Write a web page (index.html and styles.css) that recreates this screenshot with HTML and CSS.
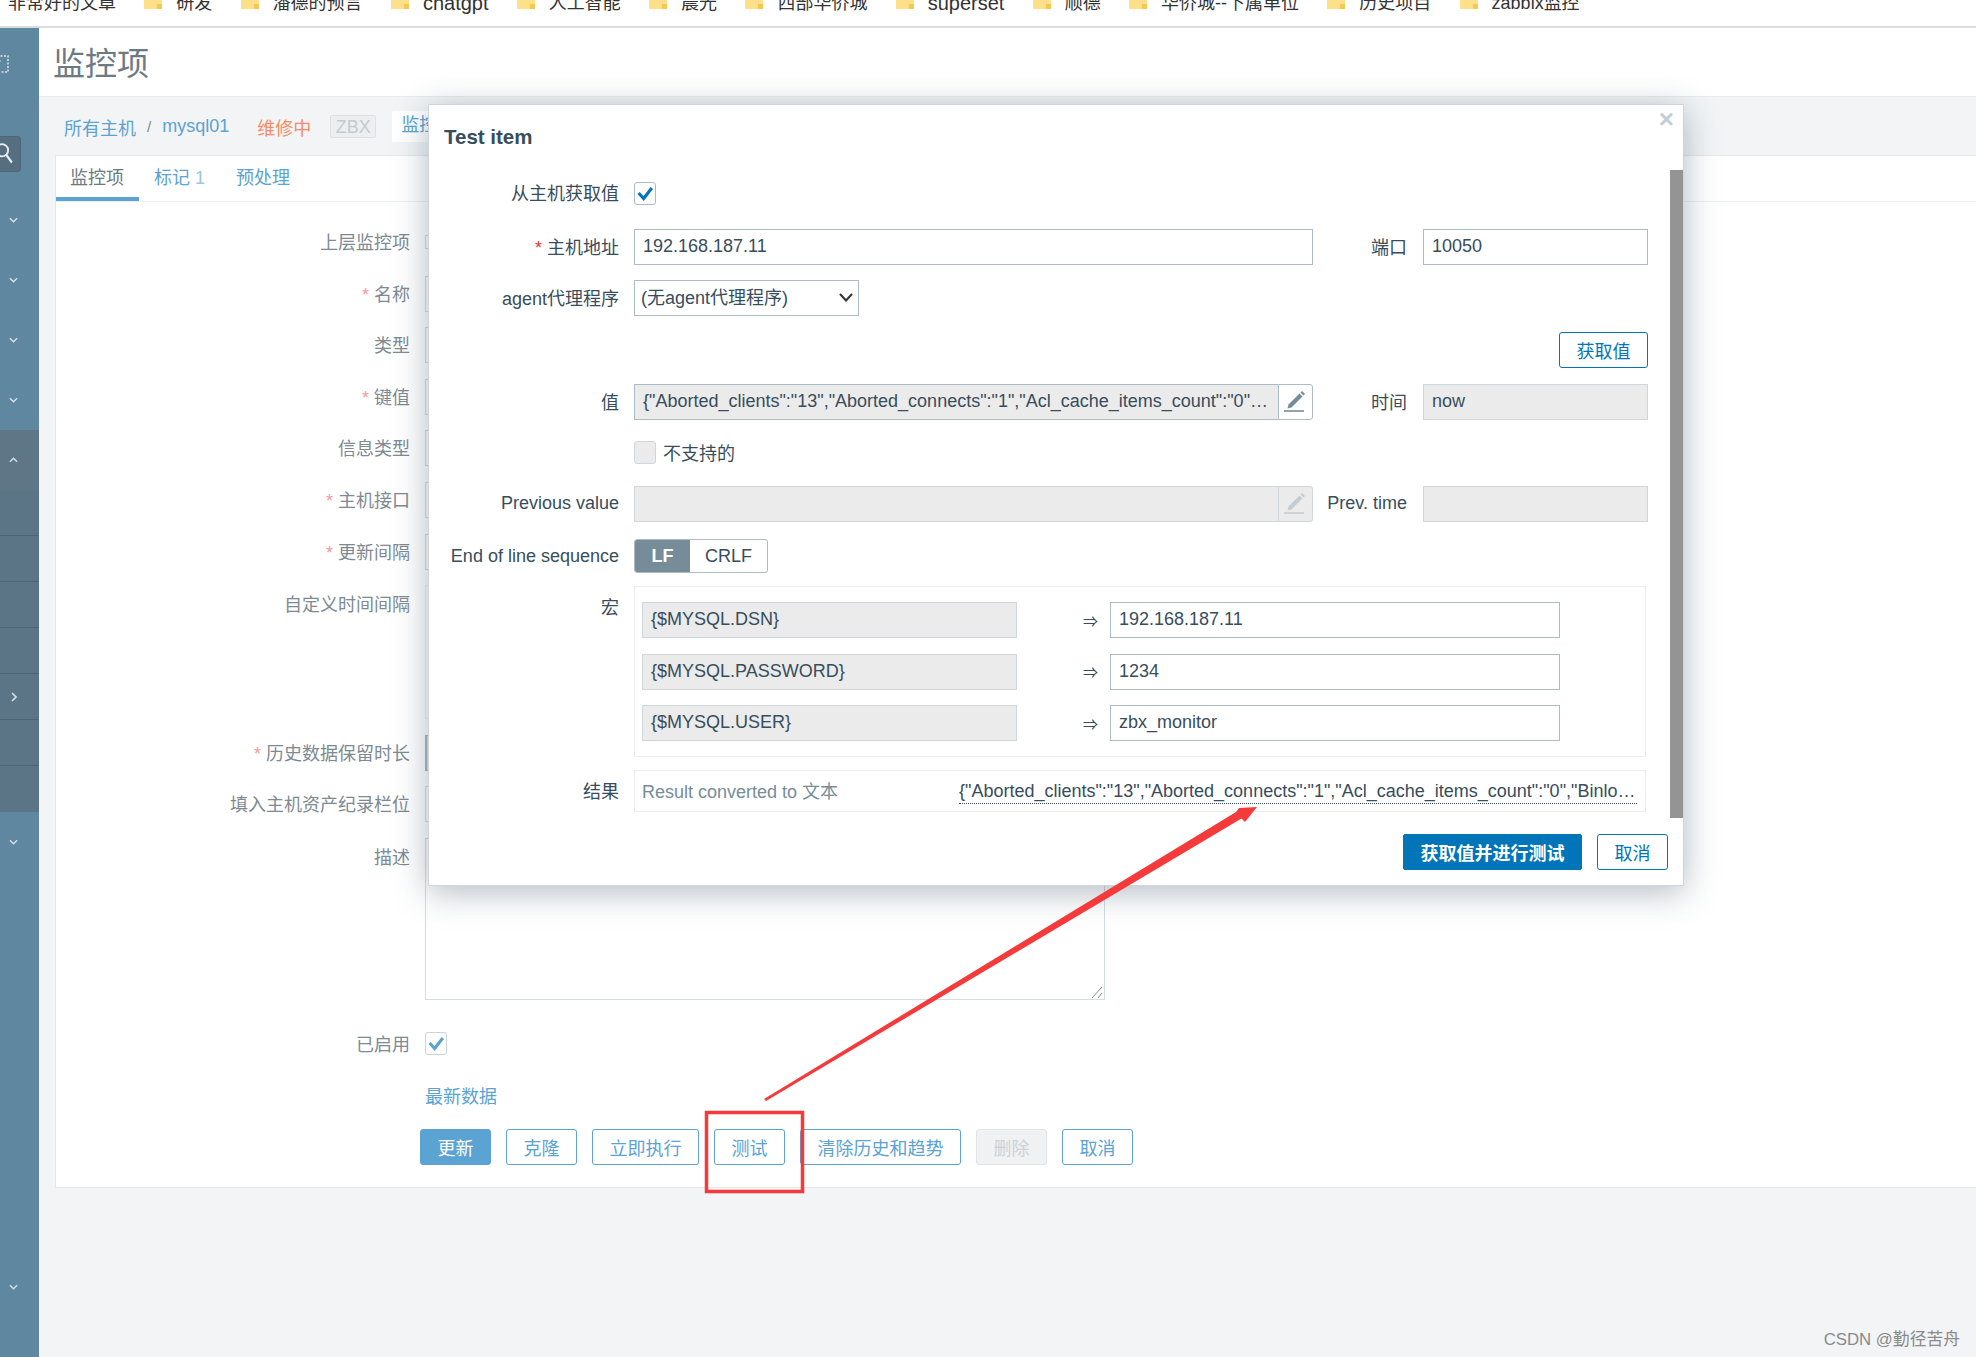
FILE: index.html
```html
<!DOCTYPE html>
<html lang="zh-CN">
<head>
    <meta charset="UTF-8">
    <title>监控项</title>
    <link rel="stylesheet" href="styles.css">
</head>
<body>
    <!-- Bookmarks Bar -->
    <div class="bookmarks">
        <span class="bookmark">非常好的文章</span>
        <span class="bookmark"><svg class="folder" viewBox="0 0 18 16"><path d="M0 2h7l2 2h9v12H0z" fill="#ffe08a"/><path d="M13 16v-5h5v5z" fill="#f6c94e"/></svg>研发</span>
        <span class="bookmark"><svg class="folder" viewBox="0 0 18 16"><path d="M0 2h7l2 2h9v12H0z" fill="#ffe08a"/><path d="M13 16v-5h5v5z" fill="#f6c94e"/></svg>潘德的预言</span>
        <span class="bookmark latin"><svg class="folder" viewBox="0 0 18 16"><path d="M0 2h7l2 2h9v12H0z" fill="#ffe08a"/><path d="M13 16v-5h5v5z" fill="#f6c94e"/></svg>chatgpt</span>
        <span class="bookmark"><svg class="folder" viewBox="0 0 18 16"><path d="M0 2h7l2 2h9v12H0z" fill="#ffe08a"/><path d="M13 16v-5h5v5z" fill="#f6c94e"/></svg>人工智能</span>
        <span class="bookmark"><svg class="folder" viewBox="0 0 18 16"><path d="M0 2h7l2 2h9v12H0z" fill="#ffe08a"/><path d="M13 16v-5h5v5z" fill="#f6c94e"/></svg>晨光</span>
        <span class="bookmark"><svg class="folder" viewBox="0 0 18 16"><path d="M0 2h7l2 2h9v12H0z" fill="#ffe08a"/><path d="M13 16v-5h5v5z" fill="#f6c94e"/></svg>西部华侨城</span>
        <span class="bookmark latin"><svg class="folder" viewBox="0 0 18 16"><path d="M0 2h7l2 2h9v12H0z" fill="#ffe08a"/><path d="M13 16v-5h5v5z" fill="#f6c94e"/></svg>superset</span>
        <span class="bookmark"><svg class="folder" viewBox="0 0 18 16"><path d="M0 2h7l2 2h9v12H0z" fill="#ffe08a"/><path d="M13 16v-5h5v5z" fill="#f6c94e"/></svg>顺德</span>
        <span class="bookmark"><svg class="folder" viewBox="0 0 18 16"><path d="M0 2h7l2 2h9v12H0z" fill="#ffe08a"/><path d="M13 16v-5h5v5z" fill="#f6c94e"/></svg>华侨城--下属单位</span>
        <span class="bookmark"><svg class="folder" viewBox="0 0 18 16"><path d="M0 2h7l2 2h9v12H0z" fill="#ffe08a"/><path d="M13 16v-5h5v5z" fill="#f6c94e"/></svg>历史项目</span>
        <span class="bookmark"><svg class="folder" viewBox="0 0 18 16"><path d="M0 2h7l2 2h9v12H0z" fill="#ffe08a"/><path d="M13 16v-5h5v5z" fill="#f6c94e"/></svg>zabbix监控</span>
    </div>

    <div class="layout">
        <!-- Sidebar -->
        <aside class="sidebar">
            <svg class="side-logo" viewBox="0 0 12 18"><path d="M0 1h11v16H0" fill="none" stroke="#dbe5eb" stroke-width="1.5" stroke-dasharray="2 1.5"/><circle cx="2" cy="6" r="1.5" fill="#dbe5eb"/></svg>
            <div class="side-search">
                <svg viewBox="0 0 21 36"><circle cx="2" cy="14" r="6.5" fill="none" stroke="#e6edf1" stroke-width="2"/><path d="M6.5 19l6 8" stroke="#e6edf1" stroke-width="2.4"/></svg>
            </div>
            <div class="side-item"><svg class="chev" viewBox="0 0 10 6"><path d="M1 1l4 4 4-4"/></svg></div>
            <div class="side-item"><svg class="chev" viewBox="0 0 10 6"><path d="M1 1l4 4 4-4"/></svg></div>
            <div class="side-item"><svg class="chev" viewBox="0 0 10 6"><path d="M1 1l4 4 4-4"/></svg></div>
            <div class="side-item"><svg class="chev" viewBox="0 0 10 6"><path d="M1 1l4 4 4-4"/></svg></div>
            <div class="side-item active"><svg class="chev" viewBox="0 0 10 6"><path d="M1 5l4-4 4 4"/></svg></div>
            <div class="side-sub"></div>
            <div class="side-sub"></div>
            <div class="side-sub"></div>
            <div class="side-sub"></div>
            <div class="side-sub"><svg class="chev-right" viewBox="0 0 6 10"><path d="M1 1l4 4-4 4"/></svg></div>
            <div class="side-sub"></div>
            <div class="side-sub last"></div>
            <div class="side-item"><svg class="chev" viewBox="0 0 10 6"><path d="M1 1l4 4 4-4"/></svg></div>
            <div class="side-item side-bottom"><svg class="chev" viewBox="0 0 10 6"><path d="M1 1l4 4 4-4"/></svg></div>
        </aside>

        <!-- Page Content -->
        <main class="content">
            <header class="page-header"><h1>监控项</h1></header>

            <nav class="breadcrumbs">
                <a>所有主机</a>
                <span class="crumb-sep">/</span>
                <a>mysql01</a>
                <span class="maintenance">维修中</span>
                <span class="zbx">ZBX</span>
                <a class="crumb-tab">监控项</a>
            </nav>

            <section class="card">
                <div class="tabs">
                    <a class="tab current">监控项</a>
                    <a class="tab">标记 <sup>1</sup></a>
                    <a class="tab">预处理</a>
                </div>

                <div class="form-row short"><label>上层监控项</label><div class="stub thin"></div></div>
                <div class="form-row"><label><i>*</i>名称</label><div class="stub"></div></div>
                <div class="form-row"><label>类型</label><div class="stub"></div></div>
                <div class="form-row"><label><i>*</i>键值</label><div class="stub"></div></div>
                <div class="form-row"><label>信息类型</label><div class="stub"></div></div>
                <div class="form-row"><label><i>*</i>主机接口</label><div class="stub"></div></div>
                <div class="form-row"><label><i>*</i>更新间隔</label><div class="stub"></div></div>
                <div class="form-row tall"><label>自定义时间间隔</label><div class="stub pale"></div></div>
                <div class="form-row"><label><i>*</i>历史数据保留时长</label><div class="stub dark"></div></div>
                <div class="form-row"><label>填入主机资产纪录栏位</label><div class="stub"></div></div>
                <div class="form-row area"><label>描述</label>
                    <div class="stub textarea">
                        <svg class="grip" viewBox="0 0 12 12"><path d="M1 12L11 1M7 12l4-5" stroke="#888" fill="none"/></svg>
                    </div>
                </div>
                <div class="form-row check-row"><label>已启用</label>
                    <span class="checkbox faded"><svg viewBox="0 0 22 22"><path d="M4 10.5l5.5 6L18.5 5" /></svg></span>
                </div>
                <div class="form-row link-row"><label></label><a class="latest">最新数据</a></div>

                <div class="form-actions">
                    <button class="btn-fill">更新</button>
                    <button>克隆</button>
                    <button class="wide">立即执行</button>
                    <button>测试</button>
                    <button class="widest">清除历史和趋势</button>
                    <button class="off">删除</button>
                    <button>取消</button>
                </div>
            </section>
        </main>
    </div>

    <!-- Test Item Dialog -->
    <div class="modal">
        <span class="modal-close">×</span>
        <div class="modal-scroll"></div>
        <h2>Test item</h2>

        <div class="row first">
            <label>从主机获取值</label>
            <span class="checkbox"><svg viewBox="0 0 22 22"><path d="M4 10.5l5.5 6L18.5 5" /></svg></span>
        </div>
        <div class="row">
            <label><i>*</i>主机地址</label>
            <div class="field grow">192.168.187.11</div>
            <label class="side-label">端口</label>
            <div class="field small">10050</div>
        </div>
        <div class="row">
            <label>agent代理程序</label>
            <div class="field select">(无agent代理程序)
                <svg viewBox="0 0 14 9"><path d="M1 1l6 6.5L13 1" fill="none" stroke="#333" stroke-width="2"/></svg>
            </div>
        </div>
        <div class="row end">
            <button class="btn-outline">获取值</button>
        </div>
        <div class="row value-row">
            <label>值</label>
            <div class="group grow">
                <div class="field ro strong nowrap">{"Aborted_clients":"13","Aborted_connects":"1","Acl_cache_items_count":"0"…</div>
                <span class="edit"><svg viewBox="0 0 24 24"><path d="M3.5 18.5l1-4L15.5 3.5l3 3L7.5 17.5z" fill="#768d99"/><path d="M16.5 2.5L18 1l3 3-1.5 1.5z" fill="#768d99"/><path d="M0 21h20" stroke="#768d99" stroke-width="1.6"/></svg></span>
            </div>
            <label class="side-label">时间</label>
            <div class="field small ro">now</div>
        </div>
        <div class="row unsupported">
            <label></label>
            <span class="checkbox off"></span>
            <span class="check-text">不支持的</span>
        </div>
        <div class="row plain prev-row">
            <label>Previous value</label>
            <div class="group grow">
                <div class="field ro"></div>
                <span class="edit off"><svg viewBox="0 0 24 24"><path d="M3.5 18.5l1-4L15.5 3.5l3 3L7.5 17.5z" fill="#c5cdd2"/><path d="M16.5 2.5L18 1l3 3-1.5 1.5z" fill="#c5cdd2"/><path d="M0 21h20" stroke="#c5cdd2" stroke-width="1.6"/></svg></span>
            </div>
            <label class="side-label">Prev. time</label>
            <div class="field small ro"></div>
        </div>
        <div class="row plain eol">
            <label>End of line sequence</label>
            <div class="toggle"><span class="on">LF</span><span>CRLF</span></div>
        </div>
        <div class="row macro-row">
            <label>宏</label>
            <div class="macros">
                <div class="macro"><div class="field ro name">{$MYSQL.DSN}</div><span class="to">⇒</span><div class="field val">192.168.187.11</div></div>
                <div class="macro"><div class="field ro name">{$MYSQL.PASSWORD}</div><span class="to">⇒</span><div class="field val">1234</div></div>
                <div class="macro"><div class="field ro name">{$MYSQL.USER}</div><span class="to">⇒</span><div class="field val">zbx_monitor</div></div>
            </div>
        </div>
        <div class="row result-row">
            <label>结果</label>
            <div class="result">
                <span class="converted">Result converted to 文本</span>
                <span class="result-value">{"Aborted_clients":"13","Aborted_connects":"1","Acl_cache_items_count":"0","Binlog_cache_disk_use":"0","Binlog_stmt"</span>
            </div>
        </div>
        <div class="modal-footer">
            <button class="btn-primary">获取值并进行测试</button>
            <button class="btn-outline">取消</button>
        </div>
    </div>

    <!-- Red annotations drawn on the screenshot -->
    <svg class="marks" viewBox="0 0 1976 1357">
        <rect x="706.5" y="1112.5" width="96" height="79" fill="none" stroke="#f43a3a" stroke-width="3.5"/>
        <polygon points="764,1099 1236,812 1239,808 1257,807 1245,822 1241.5,818.5 766,1101" fill="#f43a3a"/>
    </svg>

    <div class="watermark">CSDN @勤径苦舟</div>
</body>
</html>
```

FILE: styles.css
```css
* {
    box-sizing: border-box;
}
html, body {
    margin: 0;
    padding: 0;
}
body {
    width: 1976px;
    height: 1357px;
    position: relative;
    overflow: hidden;
    font-family: "Liberation Sans", "Noto Sans CJK SC", sans-serif;
    font-size: 18px;
    color: #384d5c;
    background-color: #f2f4f6;
}
button {
    font: inherit;
    cursor: pointer;
}
label i {
    font-style: normal;
    color: #e33734;
    margin-right: 5px;
}

/* Bookmarks Bar */
.bookmarks {
    height: 28px;
    padding: 0 0 14px 8px;
    display: flex;
    align-items: flex-end;
    gap: 28.3px;
    overflow: hidden;
    background-color: #fff;
    border-bottom: 2px solid #dcdcdc;
    font-size: 18px;
    line-height: 18px;
    color: #333;
}
.bookmark {
    display: flex;
    align-items: flex-end;
    flex-shrink: 0;
    white-space: nowrap;
}
.bookmark.latin {
    font-size: 20px;
}
.folder {
    width: 18px;
    height: 16px;
    margin-right: 14px;
    margin-bottom: 3px;
}

/* Layout */
.layout {
    display: flex;
    height: 1329px;
}
.sidebar {
    width: 39px;
    flex-shrink: 0;
    display: flex;
    flex-direction: column;
    background-color: #5f87a0;
}
.side-logo {
    width: 12px;
    height: 18px;
    margin: 27px 0 0 -3px;
}
.side-search {
    width: 21px;
    height: 36px;
    margin-top: 63px;
    margin-bottom: 18px;
    background-color: #566f80;
    border: 1px solid #4e6778;
    border-left: 0;
    border-radius: 0 4px 4px 0;
}
.side-search svg {
    display: block;
    width: 20px;
    height: 34px;
}
.side-item {
    height: 60px;
    padding-left: 9px;
    display: flex;
    align-items: center;
}
.side-item.active {
    background-color: #5f7686;
}
.side-bottom {
    margin-top: auto;
    margin-bottom: 40px;
}
.side-sub {
    height: 46px;
    padding-left: 11px;
    display: flex;
    align-items: center;
    background-color: #5b7587;
    border-bottom: 1px solid #4c6475;
}
.side-sub:first-of-type {
    height: 45px;
}
.side-sub.last {
    border-bottom: 0;
}
.chev {
    width: 9px;
    height: 6px;
}
.chev-right {
    width: 6px;
    height: 10px;
}
.chev path, .chev-right path {
    fill: none;
    stroke: #d4e0e7;
    stroke-width: 1.6;
}

/* Page Content */
.content {
    flex: 1;
    min-width: 0;
}
.page-header {
    height: 69px;
    padding-left: 14px;
    display: flex;
    align-items: center;
    background-color: #fff;
    border-bottom: 1px solid #e9ecee;
}
.page-header h1 {
    margin: 0 0 2px;
    font-size: 32px;
    font-weight: normal;
    color: #6c7a84;
}
.breadcrumbs {
    height: 58px;
    padding-left: 25px;
    padding-top: 1px;
    display: flex;
    align-items: center;
    color: #5ba3d2;
}
.crumb-sep {
    margin: 0 11px;
    color: #7a8a95;
    font-size: 15px;
}
.maintenance {
    margin-left: 28px;
    color: #f58c68;
}
.zbx {
    margin-left: 19px;
    width: 46px;
    height: 23px;
    line-height: 23px;
    text-align: center;
    color: #c3cbd0;
    background-color: #eceef0;
    border: 1px solid #dde1e4;
    border-radius: 2px;
}
.crumb-tab {
    margin-left: 16px;
    padding: 0 9px;
    width: 300px;
    height: 31px;
    line-height: 29px;
    background-color: #fff;
    border-radius: 2px;
}
.card {
    height: 1033px;
    background-color: #fff;
    border-top: 1px solid #e5e8ea;
    border-left: 1px solid #e5e8ea;
    border-bottom: 1px solid #e5e8ea;
    margin-left: 16px;
    margin-top: 0;
}
.tabs {
    height: 46px;
    display: flex;
    border-bottom: 1px solid #ecEff1;
    margin-bottom: 22px;
    color: #5ba3d2;
}
.tab {
    padding: 0 16px 0 15px;
    height: 45px;
    line-height: 44px;
}
.tab sup {
    font-size: inherit;
    vertical-align: baseline;
    color: #9cc6e2;
}
.tab.current {
    width: 83px;
    padding-left: 14px;
    padding-right: 0;
    color: #6c7a84;
    border-bottom: 4px solid #5ba3d2;
}
.form-row {
    display: flex;
    align-items: center;
    height: 36px;
    margin-bottom: 15.6px;
    color: #7d8a93;
}
.form-row label {
    width: 354px;
    margin-right: 15px;
    padding-bottom: 2px;
    text-align: right;
}
.form-row label i {
    color: #f29a9a;
}
.form-row.short {
    margin-top: 0;
}
.form-row.tall {
    height: 134px;
    align-items: flex-start;
}
.form-row.tall label, .form-row.area label {
    padding-top: 5px;
}
.form-row.area {
    height: 162px;
    align-items: flex-start;
}
.form-row.check-row {
    height: 22px;
    margin-top: 33px;
    margin-bottom: 0;
}
.form-row.link-row {
    height: 22px;
    margin-top: 29px;
    margin-bottom: 0;
}
.latest {
    color: #5ba3d2;
}
.stub {
    width: 400px;
    height: 36px;
    background-color: #fff;
    border: 1px solid #d5dbdf;
}
.stub.thin {
    height: 14px;
}
.stub.pale {
    height: 134px;
    border-color: #edf0f2;
}
.stub.dark {
    background-color: #dbe1e5;
    border-color: #a9b8c2;
    border-width: 1px 0 1px 2px;
}
.stub.textarea {
    width: 680px;
    height: 162px;
    position: relative;
}
.grip {
    position: absolute;
    right: 1px;
    bottom: 1px;
    width: 12px;
    height: 12px;
}
.form-actions {
    margin: 23px 0 0 364px;
    display: flex;
    gap: 15px;
}
.form-actions button {
    width: 71px;
    height: 36px;
    padding: 0;
    color: #5ba3d2;
    background-color: #fff;
    border: 1px solid #5ba3d2;
    border-radius: 3px;
}
.form-actions .wide {
    width: 107px;
}
.form-actions .widest {
    width: 161px;
}
.form-actions .btn-fill {
    color: #fff;
    background-color: #5ba3d2;
}
.form-actions .off {
    color: #ccd2d6;
    background-color: #f0f1f2;
    border-color: #e1e4e6;
}

/* Checkbox */
.checkbox {
    display: block;
    width: 22px;
    height: 23px;
    flex-shrink: 0;
    background-color: #fff;
    border: 1px solid #acbbc4;
    border-radius: 3px;
}
.checkbox svg {
    display: block;
    width: 20px;
    height: 21px;
}
.checkbox path {
    fill: none;
    stroke: #0275b8;
    stroke-width: 3.4;
}
.checkbox.faded {
    border-color: #ccd4d9;
}
.checkbox.faded path {
    stroke: #5ba3d2;
}
.checkbox.off {
    background-color: #ebebeb;
    border-color: #d0d7db;
}

/* Test Item Dialog */
.modal {
    position: absolute;
    left: 428px;
    top: 104px;
    width: 1256px;
    height: 782px;
    padding-top: 20px;
    background-color: #fff;
    border: 1px solid #cfd6da;
    box-shadow: 0 6px 32px rgba(56, 77, 92, 0.38);
}
.modal h2 {
    margin: 0 0 26px 15px;
    font-size: 20.5px;
    line-height: 24px;
    font-weight: bold;
    color: #384d5c;
}
.modal-close {
    position: absolute;
    right: 9px;
    top: -1px;
    font-size: 26px;
    font-weight: bold;
    line-height: 30px;
    color: #c3cdd3;
}
.modal-scroll {
    position: absolute;
    right: 0;
    top: 65px;
    width: 13px;
    height: 648px;
    background-color: #949494;
}
.row {
    display: flex;
    align-items: center;
    height: 36px;
    margin-bottom: 15.4px;
    padding-right: 35px;
}
.row.first {
    margin-bottom: 18px;
}
.row > label {
    width: 190px;
    margin-right: 15px;
    padding-bottom: 2px;
    flex-shrink: 0;
    text-align: right;
}
.row > .side-label {
    width: 94px;
    margin-right: 16px;
}
.row.plain > label {
    padding-bottom: 0;
}
.row.end {
    justify-content: flex-end;
    margin-bottom: 16.4px;
}
.row.value-row {
    margin-bottom: 14px;
}
.row.unsupported {
    margin-bottom: 15.8px;
}
.row.prev-row {
    margin-bottom: 17.4px;
}
.field {
    height: 36px;
    line-height: 33px;
    padding: 0 8px;
    background-color: #fff;
    border: 1px solid #acbbc4;
}
.field.grow, .group.grow {
    flex: 1;
    min-width: 0;
}
.field.small {
    width: 225px;
    flex-shrink: 0;
}
.field.ro {
    background-color: #ebebeb;
    border-color: #d0d7db;
}
.field.strong {
    border-color: #acbbc4;
}
.field.select {
    width: 225px;
    padding-left: 6px;
    line-height: 35px;
    position: relative;
}
.field.select svg {
    position: absolute;
    right: 5px;
    top: 12px;
    width: 14px;
    height: 9px;
}
.group {
    display: flex;
}
.group .field {
    flex: 1;
    min-width: 0;
    border-right: 0;
}
.nowrap {
    white-space: nowrap;
    overflow: hidden;
}
.edit {
    width: 35px;
    height: 36px;
    flex-shrink: 0;
    padding: 5px;
    background-color: #fff;
    border: 1px solid #acbbc4;
    border-radius: 0 3px 3px 0;
}
.edit svg {
    display: block;
    width: 24px;
    height: 24px;
}
.edit.off {
    background-color: #ebebeb;
    border-color: #d0d7db;
}
.check-text {
    margin-left: 7px;
}
.row.eol {
    height: 34px;
    margin-bottom: 13px;
}
.toggle {
    display: flex;
    height: 34px;
    line-height: 32px;
    border: 1px solid #acbbc4;
    border-radius: 3px;
    overflow: hidden;
}
.toggle span {
    padding: 0 15px;
}
.toggle .on {
    width: 55px;
    text-align: center;
    color: #fff;
    font-weight: bold;
    background-color: #768d99;
}
.row.macro-row {
    height: 171px;
    align-items: flex-start;
    margin-bottom: 13px;
    padding-right: 37px;
}
.macro-row > label {
    padding-top: 7px;
}
.macros {
    flex: 1;
    height: 171px;
    padding: 15px 0 0 7px;
    border: 1px solid #ebeef0;
}
.macro {
    display: flex;
    align-items: center;
    margin-bottom: 15.4px;
}
.field.name {
    width: 375px;
}
.to {
    width: 93px;
    padding-right: 12px;
    font-size: 15px;
    text-align: right;
}
.field.val {
    width: 450px;
}
.row.result-row {
    height: 42px;
    margin-bottom: 22px;
    padding-right: 37px;
}
.result {
    flex: 1;
    height: 42px;
    min-width: 0;
    padding: 0 8px 2px 7px;
    display: flex;
    align-items: center;
    border: 1px solid #ebeef0;
}
.converted {
    width: 317px;
    flex-shrink: 0;
    color: #768d99;
}
.result-value {
    flex: 1;
    min-width: 0;
    margin-top: 2px;
    line-height: 24px;
    white-space: nowrap;
    overflow: hidden;
    text-overflow: ellipsis;
    border-bottom: 1px dotted #384d5c;
}
.modal-footer {
    display: flex;
    justify-content: flex-end;
    gap: 15px;
    padding-right: 15px;
}
.btn-primary {
    width: 179px;
    height: 36px;
    padding: 0;
    color: #fff;
    font-weight: bold;
    background-color: #0275b8;
    border: 1px solid #0275b8;
    border-radius: 2px;
}
.btn-outline {
    width: 89px;
    height: 36px;
    padding: 0;
    color: #0275b8;
    background-color: #fff;
    border: 1px solid #0275b8;
    border-radius: 3px;
}
.modal-footer .btn-outline {
    width: 71px;
}

/* Annotations */
.marks {
    position: absolute;
    left: 0;
    top: 0;
    width: 1976px;
    height: 1357px;
    pointer-events: none;
}
.watermark {
    position: absolute;
    right: 16px;
    bottom: 7px;
    color: #8a8a8a;
    font-size: 16.8px;
}
```
